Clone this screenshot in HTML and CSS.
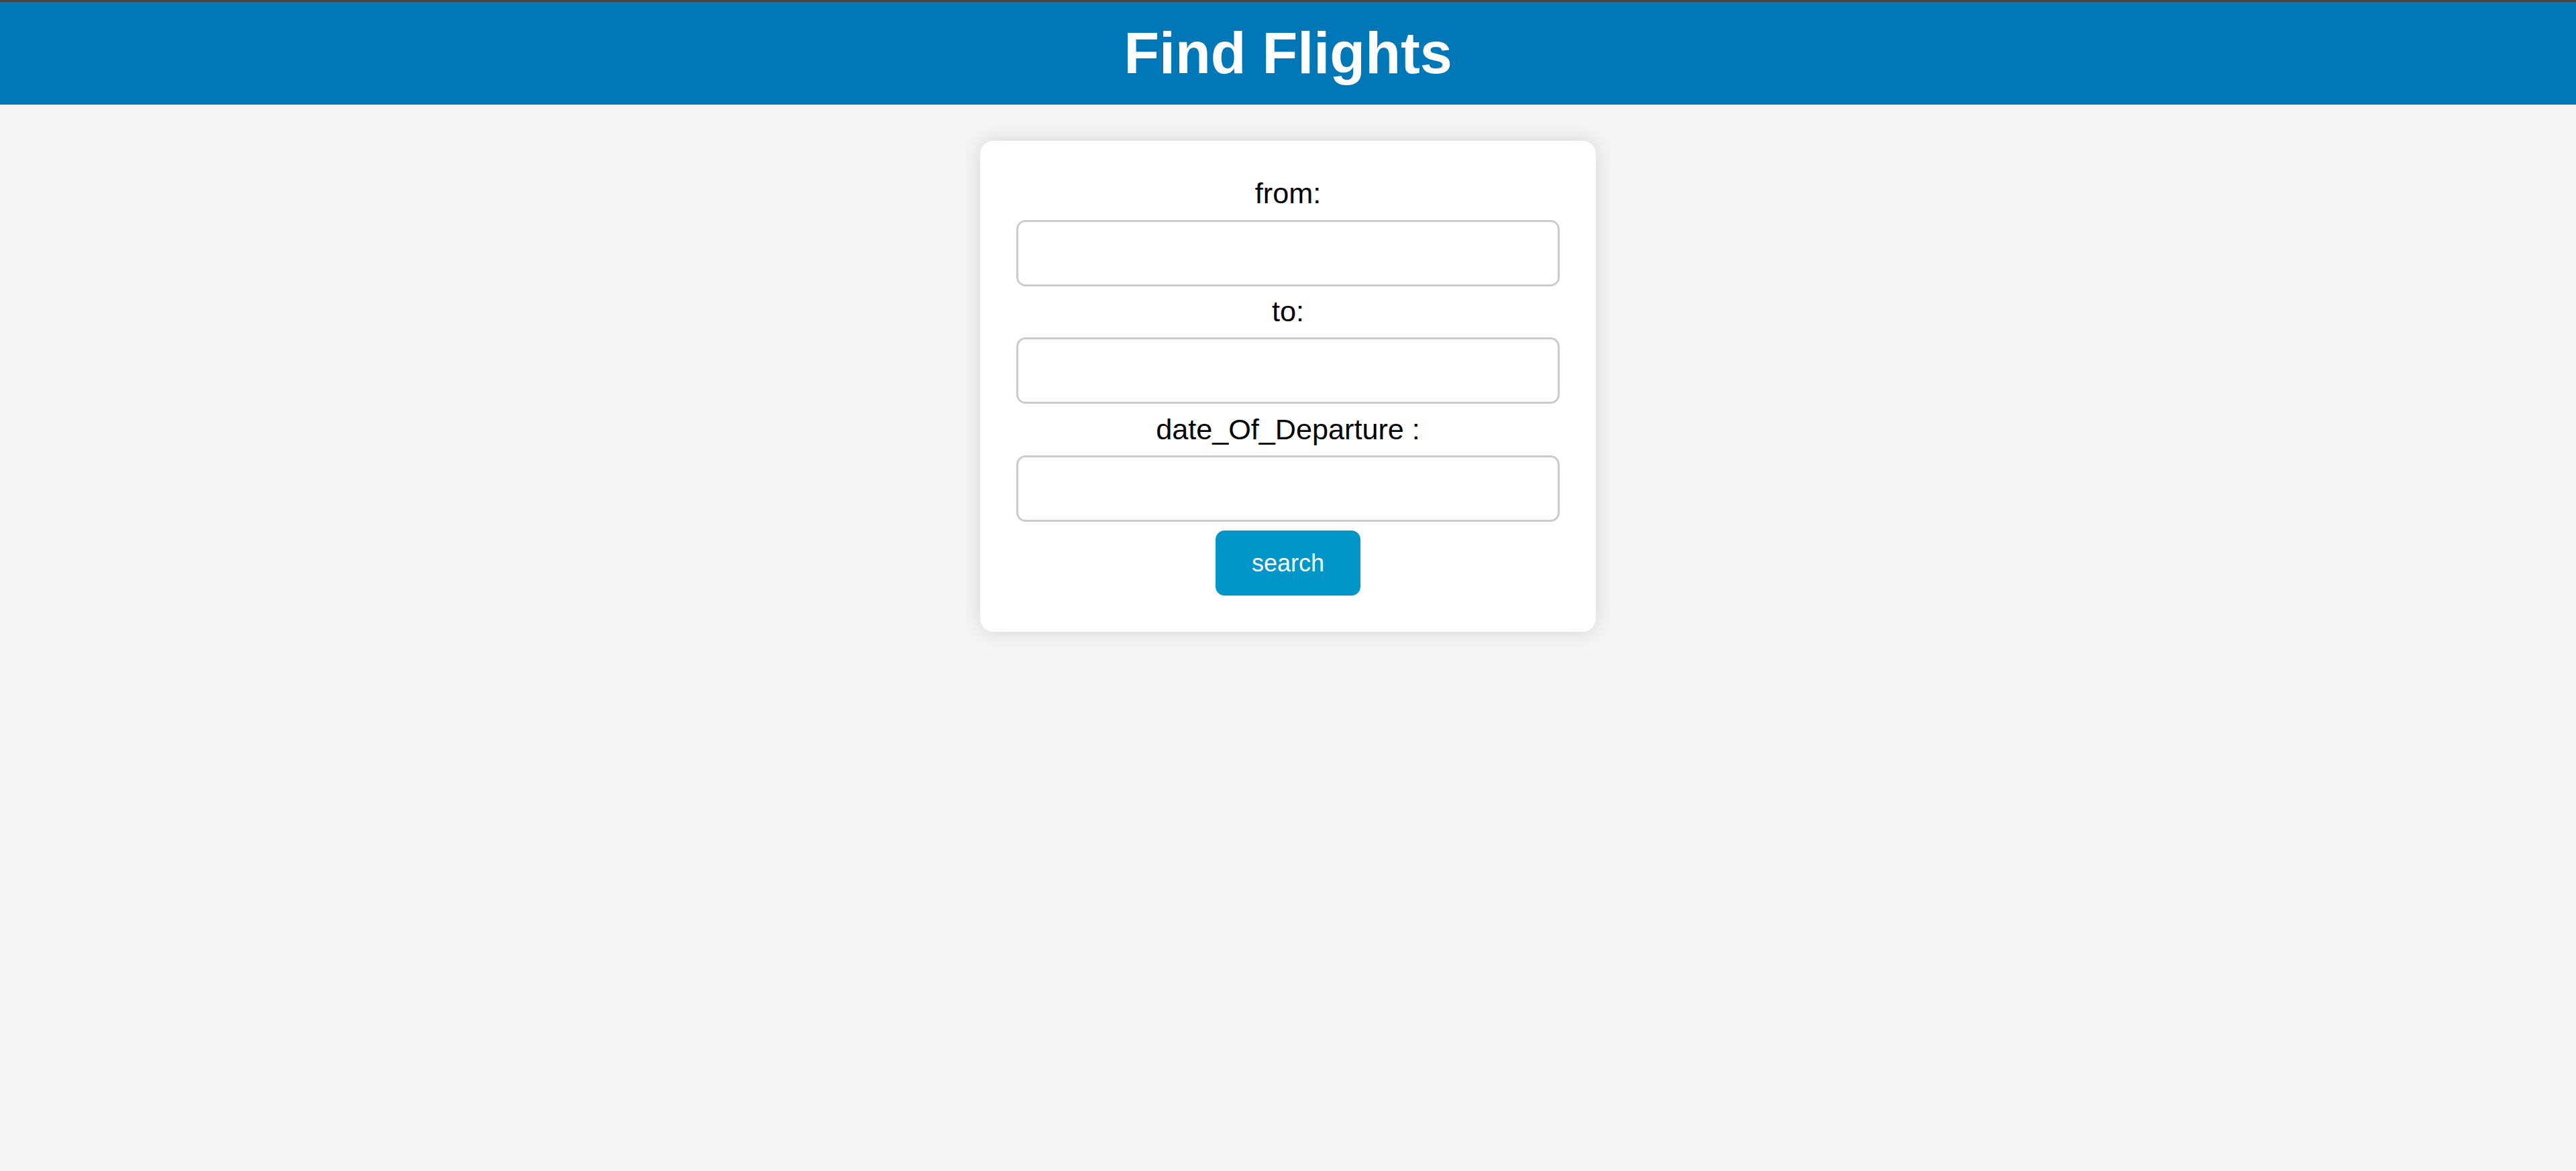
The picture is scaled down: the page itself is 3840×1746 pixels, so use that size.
FILE: index.html
```html
<!DOCTYPE html>
<html lang="en">
<head>
<meta charset="utf-8">
<title>Find Flights</title>
<link rel="stylesheet" href="styles.css">
</head>
<body>
<header class="topbar">
  <h1 class="title">Find Flights</h1>
</header>
<main class="page">
  <form class="card">
    <label class="field-label" for="from">from:</label>
    <input class="field-input" id="from" type="text">
    <label class="field-label" for="to">to:</label>
    <input class="field-input" id="to" type="text">
    <label class="field-label" for="date">date_Of_Departure :</label>
    <input class="field-input" id="date" type="text">
    <button class="search-btn" type="button">search</button>
  </form>
</main>
</body>
</html>
```
FILE: styles.css
```css
html, body {
  margin: 0;
  padding: 0;
}
body {
  background: #f4f4f4;
  font-family: "Liberation Sans", Arial, sans-serif;
  color: #000;
  min-height: 1746px;
  box-sizing: border-box;
}
.topbar {
  background: #0077b6;
  border-top: 3px solid #444444;
  padding: 27px 0;
  text-align: center;
}
.title {
  margin: 0;
  color: #fff;
  font-size: 86.4px;
  font-weight: bold;
  line-height: 99.3px;
}
.page {
  display: flex;
  justify-content: center;
  padding-top: 54px;
}
.card {
  width: 918px;
  box-sizing: border-box;
  background: #fff;
  padding: 54px;
  border-radius: 20px;
  box-shadow: 0 0 27px rgba(0, 0, 0, 0.12);
  display: flex;
  flex-direction: column;
  align-items: center;
}
.field-label {
  display: block;
  font-size: 43.2px;
  line-height: 49.7px;
  text-align: center;
}
.field-input {
  display: block;
  width: 100%;
  height: 99px;
  box-sizing: border-box;
  margin: 13.5px 0;
  border: 3px solid #cccccc;
  border-radius: 13.5px;
  background: #fff;
  font-size: 43.2px;
  padding: 0 27px;
  font-family: "Liberation Sans", Arial, sans-serif;
}
.search-btn {
  width: 216px;
  height: 97px;
  border: none;
  border-radius: 13.5px;
  background: #0096c7;
  color: #fff;
  font-family: "Liberation Sans", Arial, sans-serif;
  font-size: 36px;
  padding: 0;
}
```
